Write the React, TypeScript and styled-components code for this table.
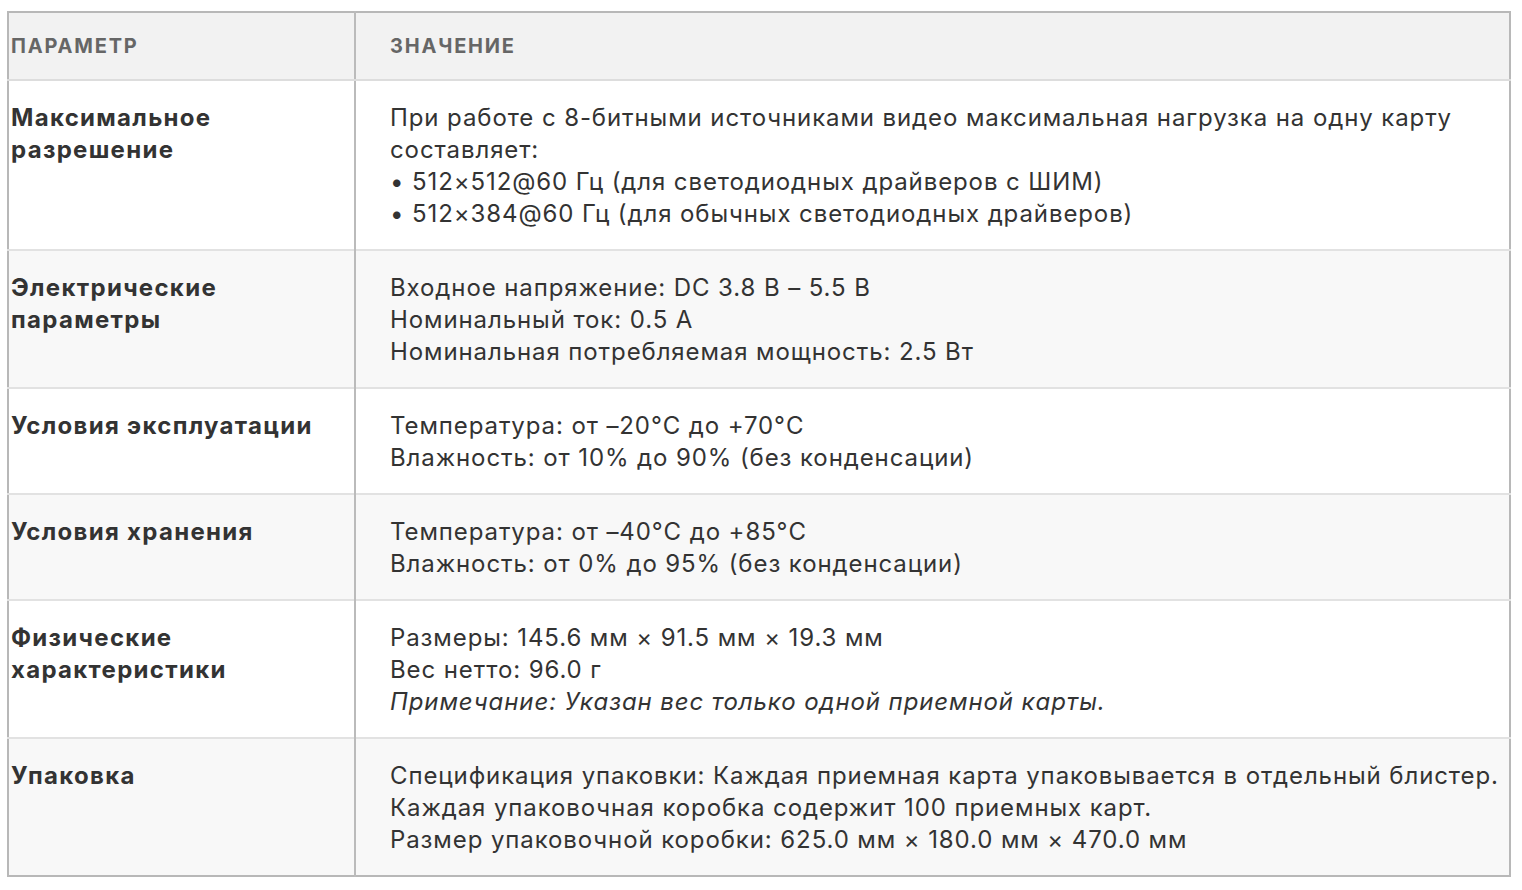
import React from 'react';
import styled, { createGlobalStyle } from 'styled-components';

const GlobalStyle = createGlobalStyle`
    body {
        margin: 0;
        background: #fff;
        font-family: Inter, "Noto Sans", sans-serif;
        color: #333;
    }
`

const Page = styled.div`
    padding: 11px 11px 12px 7px;
`

const SpecTable = styled.table`
    width: 100%;
    border-collapse: collapse;
    border: 2px solid #b8b8b8;
    font-family: Inter, "Noto Sans", sans-serif;
`

const HeadCell = styled.th<{ first?: boolean }>`
    background: #f2f2f2;
    color: #666;
    font-size: 20px;
    line-height: 24px;
    font-weight: 700;
    letter-spacing: 1.8px;
    text-transform: uppercase;
    text-align: left;
    height: 66px;
    padding: 0 ${(p) => (p.first ? '2px' : '34px')};
    border-bottom: 2px solid #ddd;
    border-left: ${(p) => (p.first ? 'none' : '2px solid #bbb')};
    width: ${(p) => (p.first ? '341px' : 'auto')};
`

const Row = styled.tr<{ shaded: boolean }>`
    background: ${(p) => (p.shaded ? '#f8f8f8' : '#fff')};
    border-bottom: 2px solid #e2e2e2;
    &:last-child { border-bottom: none; }
`

const NameCell = styled.td`
    vertical-align: top;
    font-size: 24px;
    line-height: 32px;
    font-weight: 700;
    letter-spacing: 1.3px;
    color: #333;
    padding: 21px 2px 19px 2px;
`

const ValueCell = styled.td`
    vertical-align: top;
    font-size: 24px;
    line-height: 32px;
    letter-spacing: 0.9px;
    padding: 21px 10px 19px 34px;
    border-left: 2px solid #bbb;
    color: #333;
`

const Line = styled.div<{ note?: boolean }>`
    font-style: ${(p) => (p.note ? 'italic' : 'normal')};
`

const rows: { name: string; lines: string[]; note?: string }[] = [
    {
        name: 'Максимальное разрешение',
        lines: [
            'При работе с 8-битными источниками видео максимальная нагрузка на одну карту составляет:',
            '• 512×512@60 Гц (для светодиодных драйверов с ШИМ)',
            '• 512×384@60 Гц (для обычных светодиодных драйверов)',
        ],
    },
    {
        name: 'Электрические параметры',
        lines: [
            'Входное напряжение: DC 3.8 В – 5.5 В',
            'Номинальный ток: 0.5 А',
            'Номинальная потребляемая мощность: 2.5 Вт',
        ],
    },
    {
        name: 'Условия эксплуатации',
        lines: ['Температура: от –20°C до +70°C', 'Влажность: от 10% до 90% (без конденсации)'],
    },
    {
        name: 'Условия хранения',
        lines: ['Температура: от –40°C до +85°C', 'Влажность: от 0% до 95% (без конденсации)'],
    },
    {
        name: 'Физические характеристики',
        lines: ['Размеры: 145.6 мм × 91.5 мм × 19.3 мм', 'Вес нетто: 96.0 г'],
        note: 'Примечание: Указан вес только одной приемной карты.',
    },
    {
        name: 'Упаковка',
        lines: [
            'Спецификация упаковки: Каждая приемная карта упаковывается в отдельный блистер.',
            'Каждая упаковочная коробка содержит 100 приемных карт.',
            'Размер упаковочной коробки: 625.0 мм × 180.0 мм × 470.0 мм',
        ],
    },
]

export default function App() {
    return (
        <Page>
            <GlobalStyle />
            <SpecTable>
                <thead>
                    <tr>
                        <HeadCell first>Параметр</HeadCell>
                        <HeadCell>Значение</HeadCell>
                    </tr>
                </thead>
                <tbody>
                    {rows.map((r, i) => (
                        <Row key={r.name} shaded={i % 2 === 1}>
                            <NameCell>{r.name}</NameCell>
                            <ValueCell>
                                {r.lines.map((l) => (
                                    <Line key={l}>{l}</Line>
                                ))}
                                {r.note && <Line note>{r.note}</Line>}
                            </ValueCell>
                        </Row>
                    ))}
                </tbody>
            </SpecTable>
        </Page>
    );
}
